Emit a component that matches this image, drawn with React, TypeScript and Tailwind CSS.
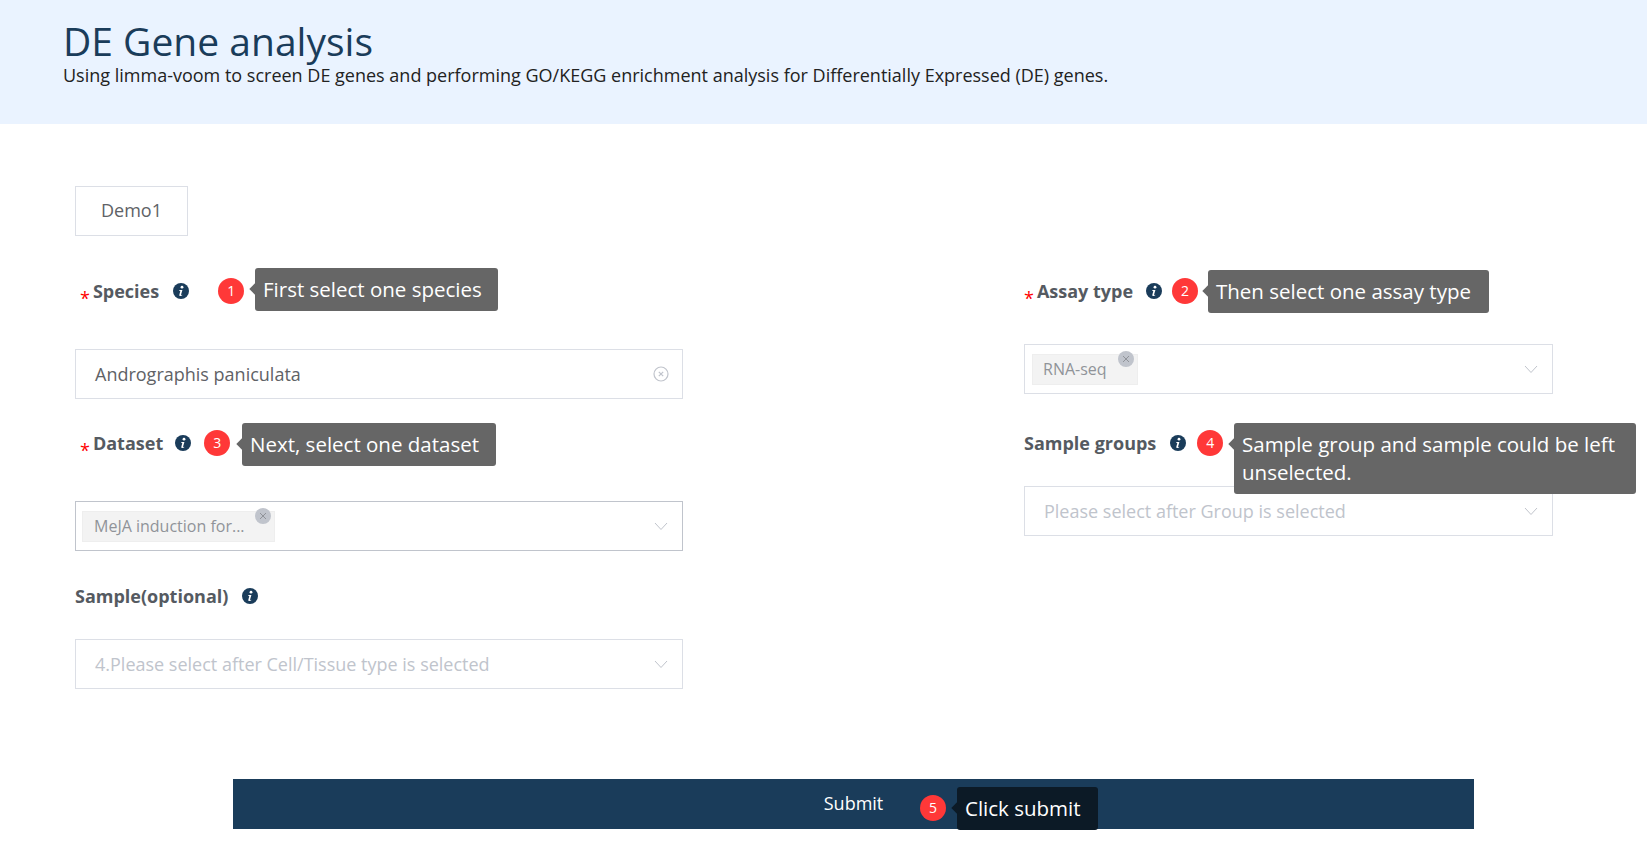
const font = "font-['Open_Sans','Noto_Sans',sans-serif]";

const InfoIcon = () => (
  <svg width="16" height="16" viewBox="0 0 16 16" className="shrink-0">
    <circle cx="8" cy="8" r="8" fill="#1a3c5a" />
    <circle cx="9" cy="4.2" r="1.4" fill="#fff" />
    <path d="M6.4 7h3l-1.3 4.6c-.1.4.3.5 1.1.1l.1.6c-1.2.8-3.200 1-3-.4l1-3.900H6.300z" fill="#fff" />
  </svg>
);

const Chevron = () => (
  <svg width="14" height="14" viewBox="0 0 14 14" fill="none" stroke="#c0c4cc" strokeWidth="1" className="mr-[1px] shrink-0">
    <path d="M1 4l6 6.500L13 4" />
  </svg>
);

const ClearIcon = () => (
  <svg width="16" height="16" viewBox="0 0 16 16" fill="none" stroke="#c0c4cc" strokeWidth="1.200" className="shrink-0">
    <circle cx="8" cy="8" r="7" />
    <path d="M5.800 5.800l4.400 4.400M10.200 5.800l-4.400 4.400" />
  </svg>
);

const Badge = ({ n, className }: { n: number; className: string }) => (
  <span className={`flex size-[26px] shrink-0 items-center justify-center rounded-full bg-[#ff3838] pb-[2px] text-[14px] text-white ${className}`}>
    {n}
  </span>
);

const Tip = ({ text, className }: { text: string; className: string }) => (
  <div className={`absolute z-10 rounded-[3px] px-2 pb-[8px] pt-[7px] text-[20.5px] leading-[28px] text-white ${className}`}>
    <span className="absolute left-[-4px] top-[17px] size-2 rotate-45 bg-inherit" />
    {text}
  </div>
);

const Label = ({ text, required }: { text: string; required?: boolean }) => (
  <span className="flex items-center text-[18px] font-bold text-[#555a61]">
    {required && <span className="mr-[3px] mt-[14px] text-[18px] font-normal leading-none text-[#f00]">*</span>}
    {text}
  </span>
);

const Tag = ({ text, className }: { text: string; className: string }) => (
  <span className={`relative flex h-[31px] items-center border border-[#eeeeee] bg-[#f3f3f3] text-[16px] text-[#909399] ${className}`}>
    {text}
    <span className="absolute right-[3px] top-[-4px] flex size-4 items-center justify-center rounded-full bg-[#c0c4cc]">
      <svg width="10" height="10" viewBox="0 0 10 10" stroke="#909399" strokeWidth="1">
        <path d="M2 2l6 6M8 2l-6 6" />
      </svg>
    </span>
  </span>
);

const Box = ({ children, dark }: { children: React.ReactNode; dark?: boolean }) => (
  <div className={`flex h-[50px] items-center justify-between border pr-[13px] ${dark ? "border-[#c0c4cc]" : "border-[#dcdfe6]"}`}>
    {children}
  </div>
);

const Placeholder = ({ text }: { text: string }) => (
  <span className="pl-[19px] text-[18px] text-[#c0c4cc]">{text}</span>
);

export default function App() {
  return (
    <div className={`min-h-[842px] bg-white ${font}`}>
      <header className="h-[124px] bg-[#eaf3ff] pl-[63px] pt-[18px]">
        <h1 className="text-[39px] leading-[45px] text-[#1a3c5a]">DE Gene analysis</h1>
        <p className="text-[18px] leading-[24px] text-[#222]">
          Using limma-voom to screen DE genes and performing GO/KEGG enrichment analysis for Differentially Expressed (DE) genes.
        </p>
      </header>

      <main className="pt-[62px]">
        <div className="ml-[75px] flex h-[50px] w-[113px] items-center justify-center border border-[#dcdfe6] pb-[2px] text-[18px] text-[#606266]">
          Demo1
        </div>

        <div className="flex">
          <section className="ml-[75px] w-[608px]">
            <div className="relative mt-[35px] flex h-[40px] items-center pl-[5px]">
              <Label text="Species" required />
              <span className="ml-[14px]"><InfoIcon /></span>
              <Badge n={1} className="ml-[29px]" />
              <Tip text="First select one species" className="left-[180px] top-[-3px] w-[243px] bg-[#666666]" />
            </div>
            <div className="mt-[38px]">
              <Box>
                <span className="pl-[19px] text-[18px] text-[#606266]">Andrographis paniculata</span>
                <ClearIcon />
              </Box>
            </div>

            <div className="relative mt-[24px] flex h-[40px] items-center pl-[5px]">
              <Label text="Dataset" required />
              <span className="ml-[12px]"><InfoIcon /></span>
              <Badge n={3} className="ml-[13px]" />
              <Tip text="Next, select one dataset" className="left-[167px] top-0 w-[254px] bg-[#666666]" />
            </div>
            <div className="mt-[38px]">
              <Box dark>
                <span className="pl-[6px]">
                  <Tag text="MeJA induction for..." className="w-[193px] pl-[11px]" />
                </span>
                <Chevron />
              </Box>
            </div>

            <div className="mt-[25px] flex h-[40px] items-center">
              <Label text="Sample(optional)" />
              <span className="ml-[14px]"><InfoIcon /></span>
            </div>
            <div className="mt-[23px]">
              <Box>
                <Placeholder text="4.Please select after Cell/Tissue type is selected" />
                <Chevron />
              </Box>
            </div>
          </section>

          <section className="ml-[341px] w-[529px]">
            <div className="relative mt-[35px] flex h-[40px] items-center">
              <Label text="Assay type" required />
              <span className="ml-[13px]"><InfoIcon /></span>
              <Badge n={2} className="ml-[10px]" />
              <Tip text="Then select one assay type" className="left-[184px] top-[-1px] w-[281px] bg-[#666666]" />
            </div>
            <div className="mt-[33px]">
              <Box>
                <span className="pl-[7px]">
                  <Tag text="RNA-seq" className="w-[106px] pl-[10px]" />
                </span>
                <Chevron />
              </Box>
            </div>

            <div className="relative mt-[29px] flex h-[40px] items-center">
              <Label text="Sample groups" />
              <span className="ml-[14px]"><InfoIcon /></span>
              <Badge n={4} className="ml-[11px]" />
              <Tip text="Sample group and sample could be left unselected." className="left-[210px] top-0 w-[402px] bg-[#666666]" />
            </div>
            <div className="mt-[23px]">
              <Box>
                <Placeholder text="Please select after Group is selected" />
                <Chevron />
              </Box>
            </div>
          </section>
        </div>

        <div className="relative ml-[233px] mt-[90px] flex h-[50px] w-[1241px] items-center justify-center bg-[#1a3c5a] pb-[2px] text-[18px] text-white">
          Submit
          <Badge n={5} className="absolute left-[687px] top-[16px]" />
          <Tip text="Click submit" className="left-[724px] top-[8px] w-[141px] bg-[#0c1a26]" />
        </div>
      </main>
    </div>
  );
}
